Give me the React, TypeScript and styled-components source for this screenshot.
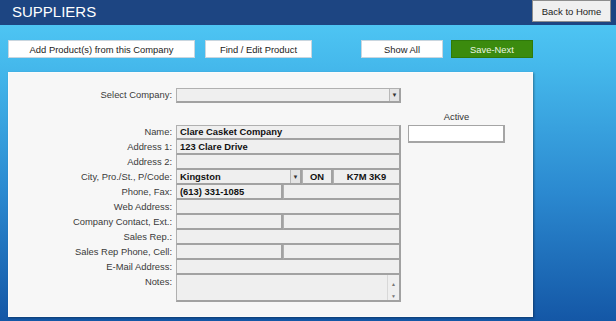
import React from 'react';
import styled, { createGlobalStyle, css } from 'styled-components';

const GlobalStyle = createGlobalStyle`
  html, body {
    margin: 0;
    padding: 0;
  }
  body {
    font-family: "Liberation Sans", Arial, sans-serif;
  }
`;

const Page = styled.div`
  width: 616px;
  height: 321px;
  display: flex;
  flex-direction: column;
  overflow: hidden;
  background: linear-gradient(to bottom, #53ccf7 0%, #45b9ec 20%, #2b89d0 60%, #1457a6 100%);
`;

const Header = styled.header`
  height: 25px;
  flex: none;
  background: #1d4582;
  display: flex;
  align-items: flex-start;
  justify-content: space-between;
`;

const Title = styled.h1`
  margin: 0;
  padding: 3px 0 0 12px;
  font-size: 15px;
  font-weight: 400;
  line-height: 17px;
  color: #fff;
`;

const HomeButton = styled.button`
  box-sizing: border-box;
  width: 79px;
  height: 22px;
  margin: 0 5px 0 0;
  background: #f0f0f0;
  border: 1px solid #8d8d8d;
  font-family: inherit;
  font-size: 9.5px;
  color: #222;
  padding: 0;
`;

const Toolbar = styled.div`
  display: flex;
  margin: 15px 0 0 8px;
  height: 18px;
`;

interface ActionProps {
  $w: number;
  $gap: number;
  $primary?: boolean;
}

const Action = styled.button<ActionProps>`
  box-sizing: border-box;
  width: ${({ $w }) => $w}px;
  margin-left: ${({ $gap }) => $gap}px;
  height: 18px;
  padding: 0;
  background: #fff;
  border: 1px solid #c9d6df;
  font-family: inherit;
  font-size: 9.4px;
  color: #222;

  ${({ $primary }) => $primary && css`
    background: #3b8b0e;
    border-color: #2f7a0a;
    color: #eaf6e2;
  `}
`;

const Panel = styled.section`
  box-sizing: border-box;
  width: 525px;
  height: 245px;
  margin: 14px 0 0 8px;
  background: #f7f7f7;
  border: 1px solid #fbfbfb;
  box-shadow: 1px 1px 2px rgba(0, 0, 0, 0.35);
  padding-top: 15px;
`;

const Form = styled.div`
  display: grid;
  grid-template-columns: 167px 225px 104px;
  grid-template-rows: 15px 22px repeat(10, 15px) 27px;
  font-size: 9.4px;
  color: #333;
`;

interface RowProps {
  $row: number;
}

const Label = styled.label<RowProps>`
  grid-column: 1;
  grid-row: ${({ $row }) => $row};
  text-align: right;
  padding-right: 4px;
  line-height: 14px;
  white-space: nowrap;
  color: #3a3a3a;
`;

const Line = styled.div<RowProps>`
  grid-column: 2;
  grid-row: ${({ $row }) => $row};
  display: flex;
  min-width: 0;
`;

const ActiveLabel = styled.div`
  grid-column: 3;
  grid-row: 2;
  margin-left: 7px;
  text-align: center;
  align-self: end;
  line-height: 12px;
  padding-bottom: 2px;
  color: #333;
`;

const ActiveBox = styled.div`
  grid-column: 3;
  grid-row: 3 / span 2;
  margin-left: 7px;
  box-sizing: border-box;
  height: 18px;
  background: #fff;
  border: 1px solid #a5a5a5;
  border-right-width: 2px;
  border-bottom-width: 2px;
`;

interface CellProps {
  $w?: number;
  $top?: boolean;
  $center?: boolean;
}

const Cell = styled.div<CellProps>`
  box-sizing: border-box;
  ${({ $w }) => ($w ? css`width: ${$w}px; flex: none;` : css`flex: 1;`)}
  height: 100%;
  background: #efefef;
  border-left: 1px solid #b0b0b0;
  border-right: 2px solid #a2a2a2;
  border-bottom: 2px solid #a2a2a2;
  border-top: ${({ $top }) => ($top ? '1px solid #b0b0b0' : '0')};
  padding: 0 3px;
  font-weight: 700;
  color: #111;
  line-height: 12px;
  white-space: nowrap;
  overflow: hidden;
  display: flex;
  align-items: center;
  justify-content: ${({ $center }) => ($center ? 'center' : 'flex-start')};
`;

const SelectBox = styled(Cell)`
  padding-right: 0;
  justify-content: space-between;
`;

const DropButton = styled.span`
  box-sizing: border-box;
  width: 10px;
  height: 100%;
  flex: none;
  border-left: 1px solid #b8b8b8;
  background: #e4e4e4;
  display: flex;
  align-items: center;
  justify-content: center;
  font-size: 6px;
  color: #333;
`;

const Notes = styled(Cell)`
  padding-right: 0;
  justify-content: flex-end;
  align-items: stretch;
`;

const ScrollBar = styled.span`
  width: 11px;
  border-left: 1px solid #d8d8d8;
  display: flex;
  flex-direction: column;
  justify-content: space-between;
  align-items: center;
  font-size: 5px;
  color: #777;
  padding: 3px 0 2px;
`;

interface RowDef {
  label: string;
  parts: { value?: string; w?: number }[];
}

const upperRows: RowDef[] = [
  { label: 'Name:', parts: [{ value: 'Clare Casket Company' }] },
  { label: 'Address 1:', parts: [{ value: '123 Clare Drive' }] },
  { label: 'Address 2:', parts: [{}] },
];

const lowerRows: RowDef[] = [
  { label: 'Phone, Fax:', parts: [{ value: '(613) 331-1085', w: 107 }, {}] },
  { label: 'Web Address:', parts: [{}] },
  { label: 'Company Contact, Ext.:', parts: [{ w: 107 }, {}] },
  { label: 'Sales Rep.:', parts: [{}] },
  { label: 'Sales Rep Phone, Cell:', parts: [{ w: 107 }, {}] },
  { label: 'E-Mail Address:', parts: [{}] },
];

function FieldRow({ row, line, top }: { row: RowDef; line: number; top?: boolean }) {
  return (
    <>
      <Label $row={line}>{row.label}</Label>
      <Line $row={line}>
        {row.parts.map((part, i) => (
          <Cell key={i} $w={part.w} $top={top}>
            {part.value}
          </Cell>
        ))}
      </Line>
    </>
  );
}

export default function App() {
  return (
    <Page>
      <GlobalStyle />
      <Header>
        <Title>SUPPLIERS</Title>
        <HomeButton>Back to Home</HomeButton>
      </Header>
      <Toolbar>
        <Action $w={187} $gap={0}>Add Product(s) from this Company</Action>
        <Action $w={107} $gap={10}>Find / Edit Product</Action>
        <Action $w={82} $gap={49}>Show All</Action>
        <Action $w={82} $gap={8} $primary>Save-Next</Action>
      </Toolbar>
      <Panel>
        <Form>
          <Label $row={1}>Select Company:</Label>
          <Line $row={1}>
            <SelectBox $top>
              <span />
              <DropButton>▼</DropButton>
            </SelectBox>
          </Line>
          <ActiveLabel>Active</ActiveLabel>
          <ActiveBox />
          {upperRows.map((row, i) => (
            <FieldRow key={row.label} row={row} line={3 + i} top={i === 0} />
          ))}
          <Label $row={6}>City, Pro./St., P/Code:</Label>
          <Line $row={6}>
            <SelectBox $w={126}>
              Kingston
              <DropButton>▼</DropButton>
            </SelectBox>
            <Cell $w={31} $center>ON</Cell>
            <Cell $center>K7M 3K9</Cell>
          </Line>
          {lowerRows.map((row, i) => (
            <FieldRow key={row.label} row={row} line={7 + i} />
          ))}
          <Label $row={13}>Notes:</Label>
          <Line $row={13}>
            <Notes>
              <ScrollBar>
                <span>▲</span>
                <span>▼</span>
              </ScrollBar>
            </Notes>
          </Line>
        </Form>
      </Panel>
    </Page>
  );
}
